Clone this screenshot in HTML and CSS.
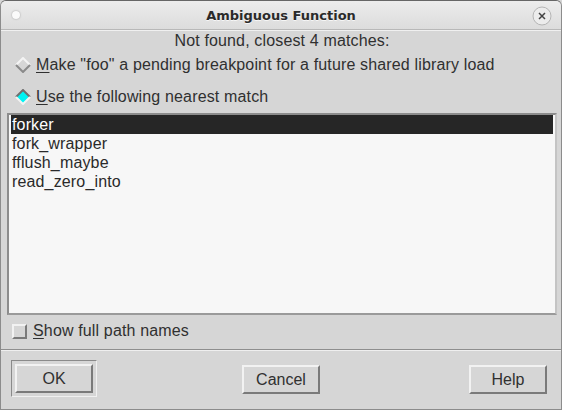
FILE: index.html
```html
<!DOCTYPE html>
<html lang="en">
<head>
    <meta charset="UTF-8">
    <title>Ambiguous Function</title>
    <link rel="stylesheet" href="styles.css">
</head>
<body>

<div class="window">
    <div class="titlebar">
        <span class="menu-dot"></span>
        <span class="title">Ambiguous Function</span>
        <span class="close">
            <svg width="20" height="20" viewBox="0 0 20 20">
                <circle cx="10" cy="10" r="9" fill="#ececec" stroke="#b4b4b4"/>
                <path d="M7 7 L13 13 M13 7 L7 13" stroke="#444" stroke-width="1.5"/>
            </svg>
        </span>
    </div>

    <div class="content">
        <p class="status">Not found, closest 4 matches:</p>

        <div class="radio-row">
            <svg class="diamond" width="16" height="16" viewBox="0 0 16 16">
                <polygon points="8,1 15,8 8,15 1,8" fill="#d6d6d6"/>
                <polyline points="1,8 8,1 15,8" fill="none" stroke="#f4f4f4" stroke-width="2"/>
                <polyline points="1,8 8,15 15,8" fill="none" stroke="#8a8a8a" stroke-width="2"/>
            </svg>
            <span><u>M</u>ake "foo" a pending breakpoint for a future shared library load</span>
        </div>

        <div class="radio-row second">
            <svg class="diamond" width="16" height="16" viewBox="0 0 16 16">
                <polygon points="8,1 15,8 8,15 1,8" fill="#00f4f4"/>
                <polyline points="1,8 8,1 15,8" fill="none" stroke="#707070" stroke-width="2"/>
                <polyline points="1,8 8,15 15,8" fill="none" stroke="#f2f2f2" stroke-width="2"/>
            </svg>
            <span><u>U</u>se the following nearest match</span>
        </div>

        <div class="listbox">
            <div class="item selected">forker</div>
            <div class="item">fork_wrapper</div>
            <div class="item">fflush_maybe</div>
            <div class="item">read_zero_into</div>
        </div>

        <div class="check-row">
            <span class="checkbox"></span>
            <span><u>S</u>how full path names</span>
        </div>
    </div>

    <div class="buttons">
        <div class="default-ring">
            <button class="btn">OK</button>
        </div>
        <button class="btn cancel">Cancel</button>
        <button class="btn help">Help</button>
    </div>
</div>

</body>
</html>
```

FILE: styles.css
```css
/* Global */
body {
    margin: 0;
    background: #d6d6d6;
    font-family: 'Liberation Sans', Arial, sans-serif;
    font-size: 16px;
    letter-spacing: 0.15px;
    color: #303030;
}

/* Window frame */
.window {
    width: 560px;
    height: 408px;
    border: 1px solid #8c8c8c;
    border-top-color: #666;
    border-radius: 6px 6px 0 0;
    background: #d6d6d6;
    display: flex;
    flex-direction: column;
    overflow: hidden;
}

/* Title bar */
.titlebar {
    height: 28px;
    flex-shrink: 0;
    display: flex;
    align-items: center;
    justify-content: space-between;
    padding: 0 9px 0 11px;
    background: linear-gradient(to bottom, #ececec, #dcdcdc);
    border-bottom: 1px solid #b8b8b8;
    box-shadow: 0 1px 0 #f0f0f0;
}

.menu-dot {
    width: 8px;
    height: 8px;
    border-radius: 50%;
    background: #fafafa;
    box-shadow: 0 0 2px #9a9a9a;
}

.title {
    font-family: 'DejaVu Sans', sans-serif;
    font-weight: bold;
    font-size: 13px;
    letter-spacing: 0;
    color: #2a2a2a;
    text-shadow: 0 1px 0 #f6f6f6;
    margin-left: 10px;
}

.close {
    display: flex;
    margin-top: 2px;
}

/* Content */
.content {
    padding: 0 4px 0 6px;
}

.status {
    margin: 2px 0 0;
    text-align: center;
    line-height: 18px;
    height: 18px;
}

.radio-row {
    display: flex;
    align-items: center;
    gap: 5px;
    margin-top: 6px;
    padding-left: 8px;
    height: 18px;
}

.radio-row.second {
    margin-top: 14px;
}

u {
    text-decoration: underline;
    text-underline-offset: 2px;
}

/* Listbox */
.listbox {
    margin-top: 7px;
    height: 198px;
    background: #f7f7f7;
    border: 2px solid;
    border-color: #8c8c8c #c4c4c4 #9a9a9a #8c8c8c;
    padding: 0 2px;
}

.item {
    height: 19px;
    line-height: 19px;
    padding-left: 1px;
    color: #2a2a2a;
}

.item.selected {
    background: #262626;
    color: #fff;
}

/* Checkbox */
.check-row {
    display: flex;
    align-items: center;
    gap: 6px;
    margin-top: 7px;
    padding-left: 5px;
    height: 18px;
}

.checkbox {
    width: 11px;
    height: 11px;
    border: 2px solid;
    border-color: #f2f2f2 #7a7a7a #7a7a7a #f2f2f2;
    background: #d6d6d6;
}

/* Buttons */
.buttons {
    margin-top: 9px;
    border-top: 1px solid #8e8e8e;
    box-shadow: inset 0 1px 0 #efefef;
    padding: 10px 0 0 10px;
    height: 46px;
    display: flex;
    align-items: flex-start;
}

.default-ring {
    padding: 3px;
    border: 1px solid;
    border-color: #8a8a8a #f0f0f0 #f0f0f0 #8a8a8a;
}

.btn {
    width: 78px;
    height: 29px;
    font-family: 'Liberation Sans', Arial, sans-serif;
    font-size: 16px;
    color: #303030;
    background: #d6d6d6;
    border: 2px solid;
    border-color: #f2f2f2 #7a7a7a #7a7a7a #f2f2f2;
    padding: 0;
}

.buttons > .btn {
    margin-top: 5px;
}

.btn.cancel {
    margin-left: 145px;
}

.btn.help {
    margin-left: 149px;
}
```
